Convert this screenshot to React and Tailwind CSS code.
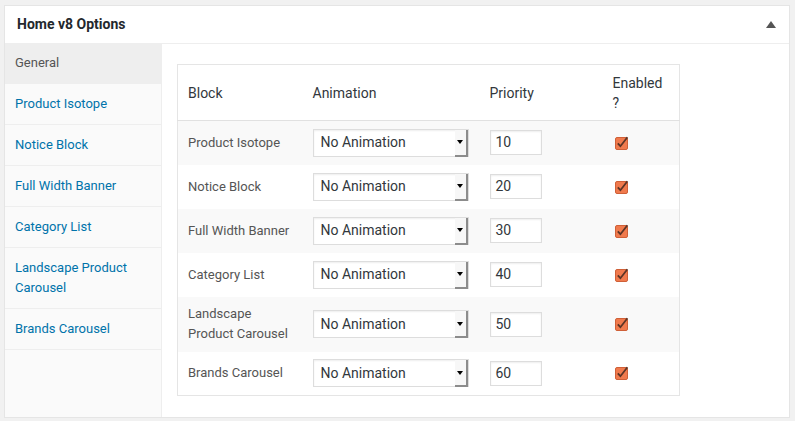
import React from 'react'

const tabs = [
  'Product Isotope',
  'Notice Block',
  'Full Width Banner',
  'Category List',
  'Landscape Product Carousel',
  'Brands Carousel',
]

const rows = [
  { name: 'Product Isotope', priority: 10 },
  { name: 'Notice Block', priority: 20 },
  { name: 'Full Width Banner', priority: 30 },
  { name: 'Category List', priority: 40 },
  { name: 'Landscape Product Carousel', priority: 50, tall: true },
  { name: 'Brands Carousel', priority: 60 },
]

function FakeSelect() {
  return (
    <div className="relative flex h-[28px] w-[156px] items-center border border-[#ddd] bg-white pl-[7px] text-[14px] text-[#32373c] shadow-[inset_0_1px_2px_rgba(0,0,0,0.07)]">
      No Animation
      <div className="absolute right-0 top-0 flex h-[27px] w-[13px] items-center justify-center border-b-2 border-r-2 border-[#8c8c8c] bg-[#f7f7f7]">
        <div className="h-0 w-0 border-x-[3px] border-t-[4px] border-x-transparent border-t-black" />
      </div>
    </div>
  )
}

function CheckIcon() {
  return (
    <svg width="14" height="14" viewBox="0 0 14 14">
      <rect x="0.5" y="1.5" width="12" height="12" rx="1.5" fill="#f07a4d" stroke="#cf6038" />
      <path d="M2.8 7.4 L5.4 10.2 L12.4 1.2" fill="none" stroke="#5b3426" strokeWidth="1.8" />
    </svg>
  )
}

export default function App() {
  return (
    <div className="min-h-[421px] bg-[#f1f1f1] pl-[4px] pr-[5px] pt-[5px] font-['Roboto',sans-serif]">
      <div className="border border-[#e5e5e5] bg-white">
        <div className="flex h-[38px] items-center justify-between border-b border-[#eee] pl-[12px] pr-[13px]">
          <h2 className="text-[14px] font-bold text-[#23282d]">Home v8 Options</h2>
          <div className="h-0 w-0 border-x-[5px] border-b-[7px] border-x-transparent border-b-[#555]" />
        </div>
        <div className="flex">
          <ul className="w-[157px] shrink-0 border-r border-[#eee] bg-[#fafafa] text-[13px] leading-[20px]">
            <li className="border-b border-[#eee] bg-[#eee] px-[10px] pb-[10px] pt-[9px] text-[#555]">General</li>
            {tabs.map((t) => (
              <li key={t} className="border-b border-[#eee] px-[10px] py-[10px] text-[#0073aa]">
                <span className={t.length > 20 ? 'block w-[120px]' : ''}>{t}</span>
              </li>
            ))}
          </ul>
          <div className="flex-1 px-[15px] pb-[21px] pt-[20px]">
            <table className="w-[502px] table-fixed border-collapse border border-[#e5e5e5] text-left">
              <thead>
                <tr className="h-[56px] border-b border-[#e1e1e1] text-[14px] leading-[20px] text-[#32373c]">
                  <th className="w-[125px] px-[10px] font-normal">Block</th>
                  <th className="w-[176px] px-[10px] font-normal">Animation</th>
                  <th className="w-[124px] px-[10px] pl-[11px] font-normal">Priority</th>
                  <th className="w-[77px] px-[10px] font-normal">Enabled ?</th>
                </tr>
              </thead>
              <tbody>
                {rows.map((r, i) => (
                  <tr
                    key={r.name}
                    className={(i % 2 === 0 ? 'bg-[#f9f9f9] ' : 'bg-white ') + (r.tall ? 'h-[55px]' : 'h-[44px]')}
                  >
                    <td className="px-[10px] text-[13px] leading-[20px] text-[#555]">{r.name}</td>
                    <td className="px-[10px]">
                      <FakeSelect />
                    </td>
                    <td className="px-[10px]">
                      <div className="ml-[1px] flex h-[25px] w-[52px] items-center border border-[#ddd] bg-white pl-[5px] text-[14px] text-[#32373c] shadow-[inset_0_1px_2px_rgba(0,0,0,0.07)]">
                        {r.priority}
                      </div>
                    </td>
                    <td className="px-[10px] pl-[12px]">
                      <div className="flex">
                        <CheckIcon />
                      </div>
                    </td>
                  </tr>
                ))}
              </tbody>
            </table>
          </div>
        </div>
      </div>
    </div>
  )
}
